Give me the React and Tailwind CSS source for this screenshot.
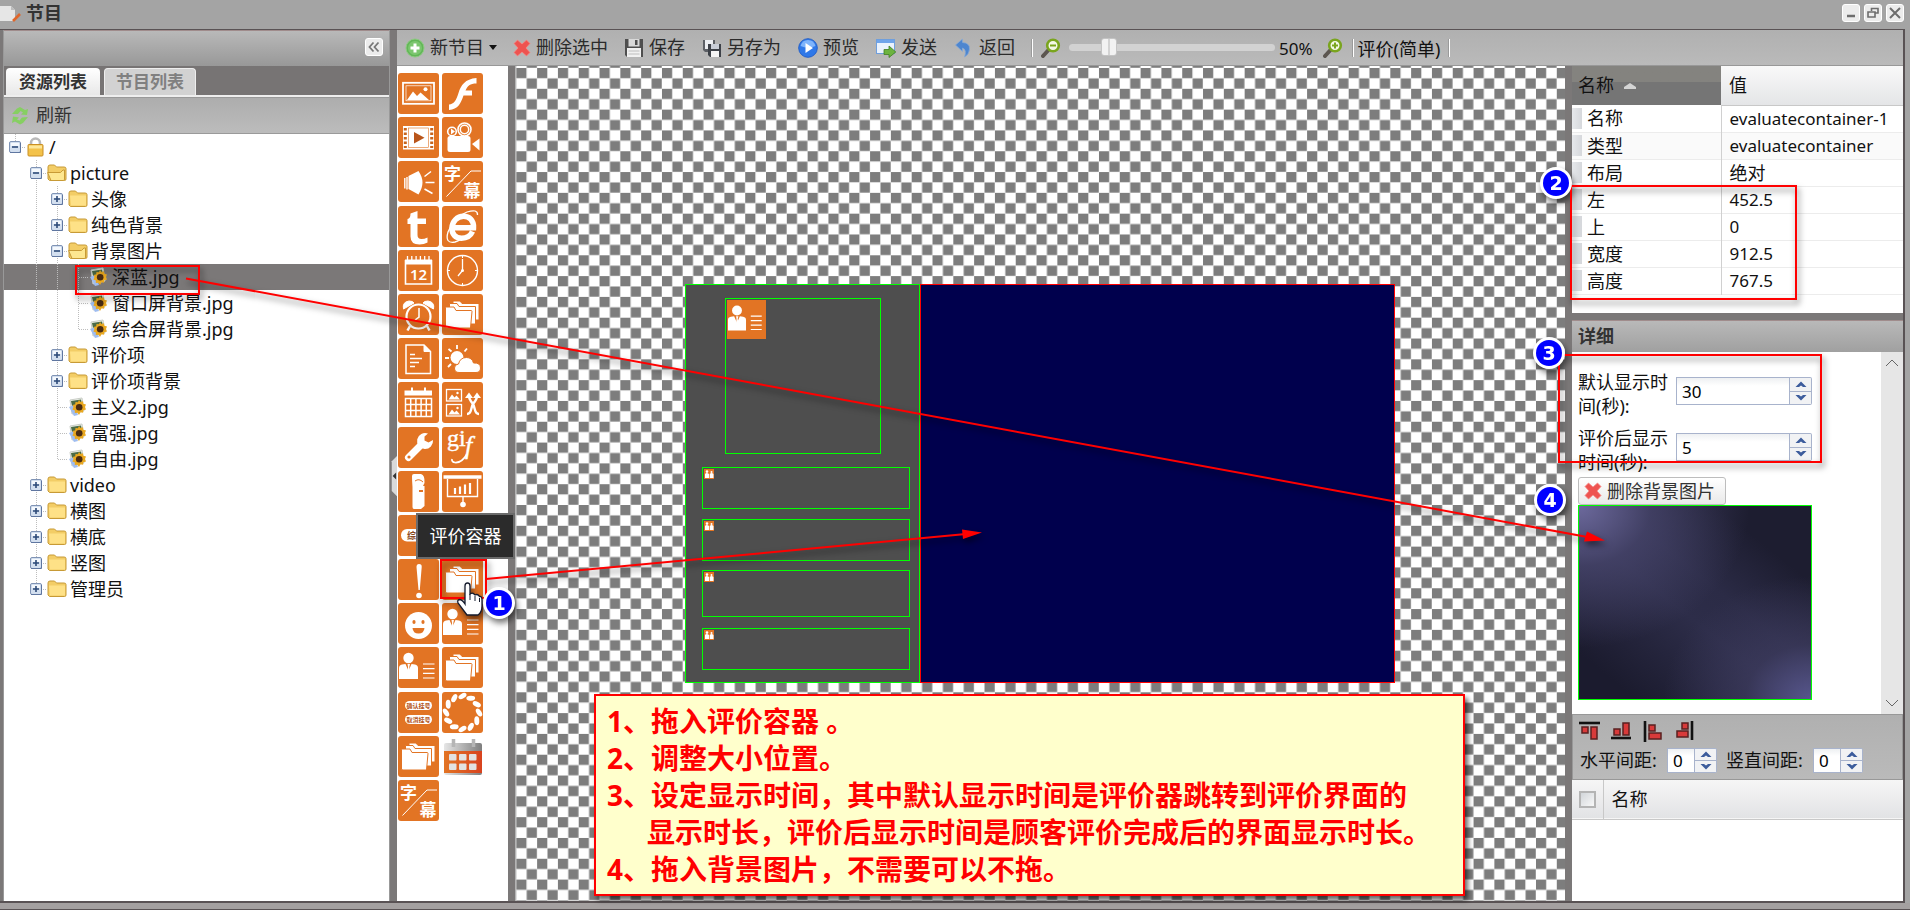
import React from "react";

const ORANGE = "#e27424";

/* ---------- tree ---------- */

const TREE = [
  { depth: 0, label: "/", icon: "lock", toggle: "minus", last: true },
  { depth: 1, label: "picture", icon: "open", toggle: "minus" },
  { depth: 2, label: "头像", icon: "folder", toggle: "plus" },
  { depth: 2, label: "纯色背景", icon: "folder", toggle: "plus" },
  { depth: 2, label: "背景图片", icon: "open", toggle: "minus" },
  { depth: 3, label: "深蓝.jpg", icon: "image", selected: true },
  { depth: 3, label: "窗口屏背景.jpg", icon: "image" },
  { depth: 3, label: "综合屏背景.jpg", icon: "image", last: true },
  { depth: 2, label: "评价项", icon: "folder", toggle: "plus" },
  { depth: 2, label: "评价项背景", icon: "folder", toggle: "plus" },
  { depth: 2, label: "主义2.jpg", icon: "image" },
  { depth: 2, label: "富强.jpg", icon: "image" },
  { depth: 2, label: "自由.jpg", icon: "image", last: true },
  { depth: 1, label: "video", icon: "folder", toggle: "plus" },
  { depth: 1, label: "横图", icon: "folder", toggle: "plus" },
  { depth: 1, label: "横底", icon: "folder", toggle: "plus" },
  { depth: 1, label: "竖图", icon: "folder", toggle: "plus" },
  { depth: 1, label: "管理员", icon: "folder", toggle: "plus", last: true },
];

function Guide({ line, toggle, own, last }) {
  return (
    <svg className="h-[26px] w-[21px] shrink-0" viewBox="0 0 21 26" aria-hidden="true">
      {line && (
        <path d={last ? "M10.5 0V13" : "M10.5 0V26"} stroke="#bdbdbd" strokeDasharray="1 1" fill="none" />
      )}
      {own && <path d="M11 13.5H21" stroke="#bdbdbd" strokeDasharray="1 1" fill="none" />}
      {toggle && (
        <g>
          <rect x="4.5" y="7.5" width="11" height="11" rx="1.5" fill="#d3dfef" stroke="#7f93b5" />
          <path d="M6 9H14V12H6Z" fill="#f4f8fd" />
          <path d="M5 18.5H15.5V9" fill="none" stroke="#5f76a0" />
          <path d={toggle === "plus" ? "M7 13H13M10 10V16" : "M7 13H13"} stroke="#2d4a78" strokeWidth="1.6" />
        </g>
      )}
    </svg>
  );
}

function TreeIcon({ type }) {
  if (type === "lock")
    return (
      <svg className="h-5 w-5 shrink-0" viewBox="0 0 20 20" aria-hidden="true">
        <path d="M5 9V6a4.500 4.500 0 0 1 9 0v3" fill="none" stroke="#b9b9b9" strokeWidth="2.600" />
        <rect x="2" y="7.500" width="15" height="11.500" rx="1" fill="#f3c24a" stroke="#c98f24" />
        <path d="M3 10H16" stroke="#fde79a" strokeWidth="3" />
      </svg>
    );
  if (type === "image")
    return (
      <svg className="h-5 w-5 shrink-0" viewBox="0 0 20 20" aria-hidden="true">
        <path d="M2 3L14 1L16 14L4 17Z" fill="#eef1ea" stroke="#c9cdc6" />
        <path d="M3 4L13 2.500L14 7L4 9Z" fill="#4c6b46" />
        <path d="M1 10L6 8L10 18L6 19Z" fill="#9fbdf0" />
        <path d="M11 3l1.500 2 2.600-.8.2 2.600 2.700.8-1 2.400 1 2.400-2.700.8-.2 2.600-2.600-.6L11 18l-1.600-2.300-2.600.3.100-2.600-2.500-1 1.100-2.300L4.700 8l2.500-.8L7.500 5l2.400.2z" fill="#e9a820" />
        <circle cx="11.200" cy="10.200" r="3.300" fill="#4a2c12" />
      </svg>
    );
  return (
    <svg className="h-5 w-5 shrink-0" viewBox="0 0 20 20" aria-hidden="true">
      <path d="M1 16V4Q1 2 3 2H7.500L9.500 4H17Q19 4 19 5.500V16Q19 17.500 17.500 17.500H2.500Z" fill="#f3cd66" stroke="#c79a36" />
      {type === "open" ? (
        <path d="M.6 9.500H13.500L16 7H17.500V16Q17.500 17.500 16.500 17.500H4Z" fill="#fde791" stroke="#c79a36" />
      ) : (
        <path d="M2 6.500H18V16.500H3Z" fill="#fee187" />
      )}
    </svg>
  );
}

function TreeRow({ node }) {
  const cells = [];
  for (let i = 0; i < node.depth; i++) cells.push(<Guide key={i} line={i > 0} />);
  return (
    <li className={`flex h-[26px] items-center pl-px ${node.selected ? "bg-[#7b7878]" : ""}`}>
      {cells}
      <Guide line own toggle={node.toggle} last={node.last} />
      <TreeIcon type={node.icon} />
      <span className="ml-[3px] whitespace-nowrap">{node.label}</span>
    </li>
  );
}

/* ---------- palette tiles ---------- */

const Folders = () => (
  <g fill="#fff" stroke={ORANGE} strokeWidth="1">
    <path d="M11 26V7H18L20 9.500H37V26Z" />
    <path d="M7.500 30V9.500H15L17 12.500H33.500V30Z" />
    <path d="M3.500 33V13.500Q3.500 13 4 13H12L14 16.500H29Q30 16.500 30 17.500L28.500 34H5Q3.500 34 3.500 33Z" />
  </g>
);

const Person = () => (
  <g fill="#fff">
    <circle cx="10.500" cy="11" r="5.200" />
    <path d="M1 32V21Q1 18 4 17.500L7.500 17L10.500 24L13.500 17L17 17.500Q20 18 20 21V32Z" />
    <path d="M9.500 17H12L11.300 20L12 25L10.700 27L9.500 25L10 20Z" />
    <path d="M25 17H36.500M25 21.700H36.500M25 26.400H36.500M25 31H36.500" stroke="#fff" strokeWidth="1.200" />
  </g>
);

const Subtitle = () => (
  <g fill="#fff" fontFamily="'Noto Sans CJK SC', sans-serif" fontWeight="700">
    <text x="2" y="18.500" fontSize="17">字</text>
    <text x="21.500" y="35.500" fontSize="17">幕</text>
    <path d="M4.500 35.500L29 10H39" fill="none" stroke="#fff" strokeWidth="1" />
  </g>
);

const MiniPic = ({ y }) => (
  <g>
    <rect x="4.500" y={y} width="15" height="11.500" fill="none" stroke="#fff" strokeWidth="1.300" />
    <path d={`M6.500 ${y + 10}l3.500-5 2.500 3 2-2 3.500 4z`} fill="#fff" />
    <circle cx="15.500" cy={y + 3.5} r="1.200" fill="#fff" />
  </g>
);

const DRAW = {
  图片: (
    <g>
      <rect x="5" y="9.800" width="31" height="21" fill="none" stroke="#fff" strokeWidth="1.800" />
      <rect x="8" y="12.800" width="25" height="15" fill="none" stroke="#fff" strokeWidth=".7" />
      <path d="M9 27L15 18.500L19 23L22.500 19.500L31 27Z" fill="#fff" />
      <circle cx="27.500" cy="16.300" r="2" fill="#fff" />
    </g>
  ),
  动画: (
    <path d="M34.500 5C23 6 19 12 16.500 20C14 28 12 31 7 31.500V37C16 36.500 19 30 21.500 22.500H30V17.500H23.500C25.500 13 28 10.500 34.500 10.500Z" fill="#fff" />
  ),
  视频: (
    <g>
      <rect x="5" y="9" width="31" height="23.500" fill="#fff" />
      <path d="M7.300 11V31M33.700 11V31" stroke="#c8641c" strokeWidth="3" strokeDasharray="2.500 2" />
      <rect x="10.500" y="11" width="20" height="19.500" fill="none" stroke={ORANGE} strokeWidth=".6" />
      <path d="M16 15V26.500L26.500 20.700Z" fill="#b9551a" />
    </g>
  ),
  摄像: (
    <g fill="#fff">
      <circle cx="10" cy="14.500" r="4.300" fill="none" stroke="#fff" strokeWidth="1.600" />
      <path d="M9 11.500V17.500L13 14.500Z" />
      <circle cx="22.500" cy="12.500" r="4.200" fill="none" stroke="#fff" strokeWidth="1.500" />
      <circle cx="22.500" cy="12.500" r="6.500" fill="none" stroke="#fff" strokeWidth="1.600" />
      <rect x="5.500" y="19" width="23" height="16" rx="2.500" />
      <path d="M30 27L37.500 21.500V33.500Z" />
    </g>
  ),
  声音: (
    <g fill="#fff">
      <path d="M10.500 15L20.500 10Q24.500 16 24.500 21.500Q24.500 27 20.500 33.500L10.500 28Z" />
      <path d="M6.800 17V27.500M9 16V28.500" stroke="#fff" strokeWidth="1.400" />
      <path d="M26.500 15.500L33 10.500M27.500 21.500H36.500M26.500 28L34.500 32.500" stroke="#fff" strokeWidth="1.500" />
    </g>
  ),
  字幕: <Subtitle />,
  文本: (
    <path d="M12.500 7.500L19.500 5V12.500H28V18H19.500V29Q19.500 33 23.500 33Q26.500 33 29.500 31.500V36.500Q26 38.500 21.500 38.500Q12.500 38.500 12.500 30.500V18H9.500V13Q12.500 12.500 12.500 7.500Z" fill="#fff" />
  ),
  网页: (
    <g fill="none" stroke="#fff">
      <path d="M11 21.800H31.500C32 14 27 10.300 21.500 10.300C15 10.300 10.500 15.500 10 21.500C9.500 28 13.500 32.200 19.500 32.200C25 32.200 28.500 30 30.500 25.500" strokeWidth="5.500" />
      <path d="M35.500 9Q36 2.500 25 6Q12 11 6 26Q2.500 38 13 36Q16 35.200 19 33" strokeWidth="1.300" />
    </g>
  ),
  日期: (
    <g>
      <path d="M7.500 10V34H33.500V10" fill="none" stroke="#fff" strokeWidth="1.600" />
      <path d="M7 12H34" stroke="#fff" strokeWidth="5" />
      <path d="M9.500 6V11M13.800 6V11M18.100 6V11M22.400 6V11M26.700 6V11M31 6V11" stroke="#fff" strokeWidth="1.300" />
      <text x="20.500" y="30" fontSize="15" fontWeight="600" fill="#fff" textAnchor="middle" fontFamily="'Noto Sans', sans-serif">12</text>
    </g>
  ),
  时钟: (
    <g fill="none" stroke="#fff">
      <circle cx="20.500" cy="20.500" r="15" strokeWidth="1.400" />
      <path d="M20.500 9V20.500L16 26" strokeWidth="1.300" />
      <circle cx="20.500" cy="20.500" r="1.500" fill="#fff" stroke="none" />
      <path d="M20.500 6V8M20.500 33V35M6 20.500H8M33 20.500H35" strokeWidth="1" />
    </g>
  ),
  闹钟: (
    <g fill="none" stroke="#fff">
      <circle cx="20.500" cy="22.500" r="12" strokeWidth="2.200" />
      <path d="M5.500 15Q4 8 11 7Q15 7 16 9Z M35.500 15Q37 8 30 7Q26 7 25 9Z" fill="#fff" strokeWidth="1" />
      <path d="M12 32L9.500 36.500M29 32L31.500 36.500" strokeWidth="2.500" />
      <path d="M21 14V23L17 26" strokeWidth="1.500" />
    </g>
  ),
  容器: <Folders />,
  文档: (
    <g fill="none" stroke="#fff">
      <path d="M8 7H26L32.500 13.500V35.500H8Z" strokeWidth="1.500" />
      <path d="M26 7V13.500H32.500Z" fill="#fff" strokeWidth="1" />
      <path d="M12 16.500H17M12 20.500H24M12 24.500H21M12 28.500H17" strokeWidth="1.700" />
    </g>
  ),
  天气: (
    <g fill="#fff">
      <circle cx="15" cy="19.500" r="6.500" />
      <path d="M15 7V11M6.500 11L9.500 13.500M3 20H7M6 29L9 26M25 10.500L22.500 13.500" stroke="#fff" strokeWidth="1.800" />
      <path d="M17 34.500Q12.500 34.500 12.500 30Q12.500 26.500 16.500 26Q18 19.500 24.500 19.500Q30 19.500 31.500 25Q38.500 24.500 38.500 30Q38.500 34.500 34 34.500Z" stroke={ORANGE} strokeWidth="1" />
    </g>
  ),
  日历: (
    <g stroke="#fff" fill="none">
      <path d="M6.500 11H34" strokeWidth="5" />
      <path d="M14 5.500V10M27 5.500V10" strokeWidth="2" />
      <path d="M7.500 16.500H33.500V34.500H7.500ZM7.500 22.500H33.500M7.500 28.500H33.500M12.700 16V34.500M17.900 16V34.500M23.100 16V34.500M28.300 16V34.500" strokeWidth="1.500" />
    </g>
  ),
  随机: (
    <g>
      <MiniPic y={7.5} />
      <MiniPic y={22.5} />
      <path d="M25 32C30 32 28.500 26 31 22C33.500 18 35 18 35 14M37 32C32 32 33.500 26 31 22C28.500 18 27 18 27 14" fill="none" stroke="#fff" strokeWidth="2.400" />
      <path d="M23 16L27 10.500L31 16ZM31 16L35 10.500L39 16Z" fill="#fff" />
    </g>
  ),
  工具: (
    <g>
      <path d="M10.500 30.500L24 17" stroke="#fff" strokeWidth="7" strokeLinecap="round" />
      <path d="M30 6.500A8 8 0 1 0 35 13L30.500 15.500L26.500 13.500V9.500Z" fill="#fff" />
      <circle cx="11" cy="30" r="1.600" fill={ORANGE} />
    </g>
  ),
  gif: (
    <g fill="#fff" stroke="#fff" strokeWidth=".4" fontFamily="'Liberation Serif', serif">
      <text x="5" y="19" fontSize="24">gi</text>
      <text x="23" y="27" fontSize="26" fontStyle="italic">f</text>
      <path d="M25 27Q20 36 13 35.500Q9.500 35 10 32" fill="none" strokeWidth="1.700" />
    </g>
  ),
  取号机: (
    <g fill="#fff">
      <path d="M14 5Q14 3 16 3H23Q27 4 26.500 12L25 15H26.500V35L23 38H16Q14.500 38 14.500 36V16Q14 10 14 5Z" />
      <path d="M17 10Q21 7 25 11" stroke={ORANGE} fill="none" />
      <rect x="21" y="19" width="4" height="2" fill={ORANGE} />
    </g>
  ),
  图表: (
    <g fill="none" stroke="#fff">
      <path d="M1.500 6H39.500" strokeWidth="3.600" />
      <path d="M5.500 8V25.500H35.500V8" strokeWidth="1.400" />
      <path d="M13 23V17M18 23V15.500M23 23V13.500M28 23V12" strokeWidth="2.200" />
      <path d="M21 26V32" strokeWidth="1.400" />
      <circle cx="21" cy="33.500" r="2.800" fill="#fff" stroke="none" />
    </g>
  ),
  综合: (
    <g>
      <rect x="3" y="14" width="34" height="12.500" rx="6" fill="#fff" />
      <text x="9" y="23.500" fontSize="9" fontWeight="700" fill="#8a4a20" fontFamily="'Noto Sans CJK SC', sans-serif">综合</text>
    </g>
  ),
  空白: null,
  提示: (
    <g fill="#fff">
      <path d="M18.500 8Q18.500 5 21 5Q24 5 23.700 8L21.800 31H20.500Z" />
      <circle cx="21" cy="36.500" r="2.800" />
    </g>
  ),
  表情: (
    <g>
      <circle cx="20.500" cy="22.500" r="13.500" fill="#fff" />
      <ellipse cx="16" cy="19" rx="1.600" ry="2" fill={ORANGE} />
      <ellipse cx="25" cy="19" rx="1.600" ry="2" fill={ORANGE} />
      <path d="M14.500 25H26.500Q26 30.500 20.500 30.500Q15 30.500 14.500 25Z" fill={ORANGE} />
    </g>
  ),
  人员: <Person />,
  挂号: (
    <g fontFamily="'Noto Sans CJK SC', sans-serif" fontSize="6" fontWeight="700" fill="#b4561c" textAnchor="middle">
      <rect x="7" y="9" width="27" height="9" rx="4.500" fill="#fff" />
      <rect x="7" y="23" width="27" height="9" rx="4.500" fill="#fff" />
      <text x="20.500" y="15.800">确认挂号</text>
      <text x="20.500" y="29.800">取消挂号</text>
    </g>
  ),
  转盘: (
    <g fill="#fff">
      {[0, 30, 60, 90, 120, 150, 180, 210, 240, 270, 300, 330].map((a) => (
        <ellipse key={a} cx="20.500" cy="4" rx="4.400" ry="2.500" transform={`rotate(${a} 20.5 20.5) rotate(-32 20.5 4)`} />
      ))}
    </g>
  ),
};

const TILES = [
  "图片", "动画", "视频", "摄像", "声音", "字幕", "文本", "网页", "日期", "时钟", "闹钟", "容器",
  "文档", "天气", "日历", "随机", "工具", "gif", "取号机", "图表", "综合", "空白", "提示", "容器",
  "表情", "人员", "人员", "容器", "挂号", "转盘", "容器", "灰日历", "字幕",
];

function GrayCalendar() {
  return (
    <svg className="h-[41px] w-[41px]" viewBox="0 0 41 41" aria-hidden="true">
      <defs>
        <linearGradient id="calBody" x1="0" y1="0" x2="1" y2="0">
          <stop offset="0" stopColor="#e27424" />
          <stop offset="1" stopColor="#d8431f" />
        </linearGradient>
        <linearGradient id="calTop" x1="0" y1="0" x2="1" y2="0">
          <stop offset="0" stopColor="#e6e6e6" />
          <stop offset="1" stopColor="#7e7e7e" />
        </linearGradient>
      </defs>
      <rect x="2" y="7" width="38" height="32" rx="2" fill="url(#calTop)" />
      <rect x="2" y="15" width="38" height="22" fill="url(#calBody)" />
      <path d="M11.500 3V11M31.500 3V11" stroke="#b5b5b5" strokeWidth="3.500" />
      {[7, 17, 27].map((x) => (
        <g key={x} fill="#e2e2e2">
          <rect x={x} y="18" width="7.500" height="6.500" rx="1" />
          <rect x={x} y="27.500" width="7.500" height="6.500" rx="1" />
        </g>
      ))}
    </svg>
  );
}

function Tile({ name }) {
  return (
    <button type="button" aria-label={name} className="block h-[41px] w-[41px]">
      {name === "灰日历" ? (
        <GrayCalendar />
      ) : (
        <svg className="h-[41px] w-[41px] overflow-visible rounded-[3px] bg-[#e27424]" viewBox="0 0 41 41" aria-hidden="true">
          {DRAW[name]}
        </svg>
      )}
    </button>
  );
}

/* ---------- toolbar icons ---------- */

const RedCross = () => (
  <svg className="h-[18px] w-[18px] shrink-0" viewBox="0 0 18 18" aria-hidden="true">
    <path d="M4.500 1L9 5L13.500 1L17 4.500L13 9L17 13.500L13.500 17L9 13L4.500 17L1 13.500L5 9L1 4.500Z" fill="#ee5350" stroke="#f58a86" strokeWidth=".8" strokeLinejoin="round" />
  </svg>
);

const Lens = ({ plus }) => (
  <svg className="h-5 w-5 shrink-0" viewBox="0 0 20 20" aria-hidden="true">
    <path d="M2 18L7.500 12" stroke="#5c5650" strokeWidth="4" strokeLinecap="round" />
    <circle cx="12" cy="7.500" r="5.800" fill="#f3f8e6" stroke="#7aa51e" strokeWidth="2.600" />
    <path d={plus ? "M9 7.500H15M12 4.500V10.500" : "M9 7.500H15"} stroke="#7aa51e" strokeWidth="2" />
  </svg>
);

const TB = {
  add: (
    <svg className="h-5 w-5" viewBox="0 0 20 20" aria-hidden="true">
      <circle cx="10" cy="10" r="9" fill="#62b657" stroke="#8ccb80" />
      <circle cx="10" cy="10" r="7" fill="#7cc66f" />
      <path d="M10 5.500V14.500M5.500 10H14.500" stroke="#fff" strokeWidth="3" />
    </svg>
  ),
  save: (
    <svg className="h-5 w-5" viewBox="0 0 20 20" aria-hidden="true">
      <path d="M1 1H19V19H3L1 17Z" fill="#4f4f4f" />
      <rect x="4.500" y="1" width="11" height="7.500" fill="#d9d9d9" />
      <rect x="11" y="2" width="2.500" height="5" fill="#4f4f4f" />
      <rect x="3" y="10" width="14" height="9" fill="#f1f1f1" />
      <path d="M4.500 13H15.500M4.500 16H15.500" stroke="#bdbdbd" />
    </svg>
  ),
  saveAs: (
    <svg className="h-5 w-5" viewBox="0 0 20 20" aria-hidden="true">
      <path d="M1 2H13V14H3L1 12Z" fill="#5d6066" />
      <rect x="3" y="2" width="8" height="9" fill="#eceef2" />
      <path d="M6 6H19V19H8L6 17Z" fill="#3d4148" />
      <rect x="9" y="6" width="8" height="5" fill="#c9ced8" />
      <rect x="9" y="13" width="8" height="6" fill="#f5f5f5" />
    </svg>
  ),
  play: (
    <svg className="h-5 w-5" viewBox="0 0 20 20" aria-hidden="true">
      <circle cx="10" cy="10" r="9.300" fill="#2f78e8" stroke="#2560c8" />
      <path d="M2.500 8Q4 2 10 2T17.500 8Q10 11 2.500 8Z" fill="#7fb4fb" />
      <path d="M7.500 5V15L15 10Z" fill="#fff" />
    </svg>
  ),
  send: (
    <svg className="h-5 w-5" viewBox="0 0 20 20" aria-hidden="true">
      <rect x=".5" y="1.500" width="18" height="14" fill="#eaf2fd" stroke="#6f9fdd" />
      <rect x="1" y="2" width="17" height="3" fill="#6fa4ea" />
      <path d="M8 11.500H13V8L19.800 14L13 19.500V16.500H8Z" fill="#6cb33f" stroke="#3f7f22" strokeWidth=".8" />
    </svg>
  ),
  back: (
    <svg className="h-5 w-5" viewBox="0 0 20 20" aria-hidden="true">
      <path d="M1.500 7L8.500 1V4.500Q16 5 15.500 11Q15.500 16 10.500 19Q13 11.500 8.500 10V13.500Z" fill="#4e86cf" stroke="#86abd9" strokeWidth=".7" />
    </svg>
  ),
};

function ToolButton({ icon, label, className = "", caret }) {
  return (
    <button type="button" className={`flex items-center gap-[5px] whitespace-nowrap text-[#2b2b2b] ${className}`}>
      {icon}
      <span>{label}</span>
      {caret && (
        <svg className="h-[5px] w-2" viewBox="0 0 8 5" aria-hidden="true">
          <path d="M0 0H8L4 5Z" fill="#111" />
        </svg>
      )}
    </button>
  );
}

const Separator = () => <span className="h-[18px] w-[2px] border-r border-white bg-[#9a9a9a]" />;

/* ---------- fields ---------- */

function Chevron({ up }) {
  return (
    <svg className="h-[7px] w-[12px]" viewBox="0 0 12 7" aria-hidden="true">
      <path d={up ? "M6 .5L11.500 6H8L6 4.500L4 6H.5Z" : "M6 6.500L.5 1H4L6 2.500L8 1H11.500Z"} fill="#3c5c9c" />
    </svg>
  );
}

function Spinner({ id, value, wide }) {
  return (
    <div className={`flex shrink-0 ${wide ? "h-7 w-[136px]" : "h-[25px] w-[50px]"}`}>
      <input
        id={id}
        type="text"
        defaultValue={value}
        className="h-full min-w-0 flex-1 border border-[#a8b3cc] bg-linear-to-b from-[#eef0f2] to-white to-30% px-[5px] text-[17px] text-black outline-none"
      />
      <div className="flex w-[22px] flex-col rounded-r-[2px] border border-l-0 border-[#a8b3cc] bg-[#f1f2f4]">
        <button type="button" aria-label="增加" className="flex flex-1 items-center justify-center border-b border-[#a8b3cc]">
          <Chevron up />
        </button>
        <button type="button" aria-label="减少" className="flex flex-1 items-center justify-center">
          <Chevron />
        </button>
      </div>
    </div>
  );
}

/* ---------- align icons ---------- */

const ALIGN = [
  ["顶部对齐", "M0 2H21", [[3, 6, 6, 6], [12, 6, 6, 12]]],
  ["底部对齐", "M0 17H20", [[3, 8, 6, 6], [12, 2, 6, 12]]],
  ["左对齐", "M2 0V21", [[6, 4, 6, 6], [6, 12, 12, 6]]],
  ["右对齐", "M17 0V19", [[7, 2, 6, 6], [2, 10, 11, 6]]],
];

/* ---------- canvas ---------- */

function Checkerboard() {
  return (
    <svg className="absolute inset-0 h-full w-full" aria-hidden="true">
      <defs>
        <pattern id="checks" x="0.300" y="2" width="20.810" height="20.810" patternUnits="userSpaceOnUse">
          <rect width="20.810" height="20.810" fill="#fff" />
          <rect width="10.200" height="10.200" fill="#7d7d7d" />
          <rect x="10.400" y="10.400" width="10.200" height="10.200" fill="#7d7d7d" />
        </pattern>
      </defs>
      <rect width="100%" height="100%" fill="url(#checks)" />
    </svg>
  );
}

function MiniPerson() {
  return (
    <svg className="m-px h-[10px] w-[10px] bg-[#e27424]" viewBox="0 0 10 10" aria-hidden="true">
      <path d="M1 9V5Q2.500 3 5 5V9ZM5.700 9V5Q7.500 3 9.500 5V9Z" fill="#fff" />
      <circle cx="3" cy="2.600" r="1.300" fill="#fff" />
      <circle cx="7.500" cy="3" r="1" fill="#fff" />
    </svg>
  );
}

function Stage() {
  const slot = "absolute left-4 w-[208px] border border-[#00ff00]";
  return (
    <div className="absolute left-[169px] top-[218px] flex h-[399px] w-[710px]">
      <div className="relative w-[235px] border border-[#00ff00] bg-[#4e4e4e]">
        <div className="absolute left-[39px] top-[13px] h-[156px] w-[156px] border border-[#00ff00]">
          <svg className="m-px h-[39px] w-[39px] bg-[#e27424]" viewBox="0 0 41 41" aria-hidden="true">
            <Person />
          </svg>
        </div>
        <div className={`${slot} top-[182px] h-[42px]`}><MiniPerson /></div>
        <div className={`${slot} top-[234px] h-[42px]`}><MiniPerson /></div>
        <div className={`${slot} top-[285px] h-[47px]`}><MiniPerson /></div>
        <div className={`${slot} top-[343px] h-[42px]`}><MiniPerson /></div>
      </div>
      <div className="flex-1 border border-[#ff0000] bg-[#00004d]" />
    </div>
  );
}

/* ---------- annotations ---------- */

function Badge({ x, y, n }) {
  return (
    <g>
      <circle cx={x} cy={y} r="16" fill="#fff" />
      <circle cx={x} cy={y} r="13" fill="#0000ff" />
      <text x={x} y={y + 7} textAnchor="middle" fontSize="19" fontWeight="700" fill="#fff" fontFamily="'DejaVu Sans', sans-serif">{n}</text>
    </g>
  );
}

function Annotations() {
  return (
    <>
      <div role="tooltip" className="absolute left-[416px] top-[513px] flex h-[46px] w-[99px] items-center justify-center border-2 border-[#6b6b6b] bg-[#2b2b2b] text-[18px] text-white">
        评价容器
      </div>
      <svg className="pointer-events-none absolute inset-0 h-full w-full drop-shadow-[2px_4px_3px_rgba(0,0,0,0.55)]" aria-hidden="true">
        <g fill="none" stroke="#ff0000" strokeWidth="2">
          <rect x="76" y="266" width="123" height="28" />
          <rect x="441" y="560" width="45" height="38" />
          <rect x="1571" y="186" width="225" height="113" />
          <rect x="1559" y="355" width="262" height="107" />
          <path d="M186 278.500L1590 537.500M486 579L966 534" />
        </g>
        <path d="M1605 540.500L1584 541.500L1587 531.500ZM982 532.500L963 539L962 529.500Z" fill="#ff0000" />
        <path d="M465 604V586Q465 583 467.500 583Q470 583 470 586V594Q473 592 475 595Q478 593.500 479.500 596.500Q482 596 482 600V606Q482 612 478 615H467Q464 611 458 603Q457 600 459.500 599.500Q462 599.500 465 604Z" fill="#fff" stroke="#151b2d" strokeWidth="1.300" />
        <path d="M470 594V600M475 596V601M479.500 598V602" stroke="#151b2d" strokeWidth="1" />
        <Badge x={499} y={603} n="1" />
        <Badge x={1556} y={183} n="2" />
        <Badge x={1549} y={353} n="3" />
        <Badge x={1550} y={500} n="4" />
      </svg>
      <div className="absolute left-[594px] top-[694px] h-[202px] w-[871px] border-2 border-[#ff0000] bg-[#ffffcc] pl-[11px] pt-[7px] text-[28px] font-bold leading-[37px] text-[#ff0000] shadow-[3px_4px_5px_rgba(0,0,0,0.6)]">
        <p>1、拖入评价容器 。</p>
        <p>2、调整大小位置。</p>
        <p>3、设定显示时间，其中默认显示时间是评价器跳转到评价界面的</p>
        <p className="pl-10">显示时长，评价后显示时间是顾客评价完成后的界面显示时长。</p>
        <p>4、拖入背景图片，不需要可以不拖。</p>
      </div>
    </>
  );
}

/* ---------- panels ---------- */

function TitleBar() {
  const btn = "flex h-[18px] w-[18px] items-center justify-center rounded-[3px] border border-white bg-[#ececec]";
  return (
    <header className="flex h-[29px] shrink-0 items-center bg-[#a4a4a4] pb-[3px] pr-[6px]">
      <svg className="h-5 w-[22px]" viewBox="0 0 22 20" aria-hidden="true">
        <path d="M0 3H11L15 7V18H0Z" fill="#e6e6e6" />
        <path d="M11 3V7H15Z" fill="#bdbdbd" />
        <path d="M13 18L20 11" stroke="#e0662a" strokeWidth="2.600" />
      </svg>
      <h1 className="ml-1 text-[18px] font-bold text-[#333]">节目</h1>
      <div className="ml-auto flex gap-1">
        <button type="button" aria-label="最小化" className={btn}>
          <svg className="h-3 w-3" viewBox="0 0 12 12"><path d="M2 9H10" stroke="#6d6d6d" strokeWidth="2.500" /></svg>
        </button>
        <button type="button" aria-label="还原" className={btn}>
          <svg className="h-3 w-3" viewBox="0 0 12 12"><path d="M4.500 4V1.500H11V6H8.500M1 5H8V10H1Z" fill="none" stroke="#6d6d6d" strokeWidth="1.600" /></svg>
        </button>
        <button type="button" aria-label="关闭" className={btn}>
          <svg className="h-3 w-3" viewBox="0 0 12 12"><path d="M1 1L11 11M11 1L1 11" stroke="#6d6d6d" strokeWidth="2" /></svg>
        </button>
      </div>
    </header>
  );
}

function ResourcePanel() {
  return (
    <aside className="flex w-[387px] shrink-0 flex-col border-x border-[#999]">
      <div className="flex h-[36px] shrink-0 items-center justify-end border-t border-[#a08c8c] bg-linear-to-b from-[#b9b9b9] to-[#989898] pb-[3px] pr-[6px]">
        <button type="button" aria-label="收起" className="flex h-[18px] w-[18px] items-center justify-center rounded-[3px] border border-white bg-[#ececec]">
          <svg className="h-3 w-3" viewBox="0 0 12 12"><path d="M5.500 1.500L1.500 6L5.500 10.500M10.500 1.500L6.500 6L10.500 10.500" fill="none" stroke="#777" strokeWidth="1.800" /></svg>
        </button>
      </div>
      <div role="tablist" className="flex h-[29px] shrink-0 items-end gap-1 bg-[#777474] pl-[2px] font-bold">
        <button type="button" role="tab" aria-selected="true" className="h-[27px] w-[94px] rounded-t-[4px] bg-linear-to-b from-white to-[#e8e8e8] text-[17px] text-[#333]">资源列表</button>
        <button type="button" role="tab" aria-selected="false" className="h-[27px] w-[92px] rounded-t-[4px] border border-b-0 border-[#eee] bg-[#d2d2d2] text-[17px] text-[#808080]">节目列表</button>
      </div>
      <div className="h-[3px] shrink-0 border-b border-[#999] bg-[#eee]" />
      <div className="flex h-[36px] shrink-0 items-center border-b border-[#9a9a9a] bg-linear-to-b from-[#adadad] to-[#bcbcbc] pl-[6px]">
        <button type="button" className="flex items-center gap-[6px] text-[18px] text-[#333]">
          <svg className="h-[20px] w-[20px]" viewBox="0 0 20 20" aria-hidden="true">
            <path d="M2 8L7 2.500L10 1L15 4L18 3L17 9L11 8.500L13 6.500L10.500 5L8 8Z" fill="#86cf62" />
            <path d="M18 11L13 17L10 18.500L5 15.500L2 17L3 10.500L9 11.500L7 13.500L9.500 14.500L12 11.500Z" fill="#86cf62" />
          </svg>
          刷新
        </button>
      </div>
      <ul className="flex-1 bg-white text-[18px] leading-[26px] text-[#111]">
        {TREE.map((node) => (
          <TreeRow key={node.label} node={node} />
        ))}
      </ul>
    </aside>
  );
}

function Toolbar() {
  return (
    <div className="flex h-[36px] shrink-0 items-center border-b border-[#989898] bg-linear-to-b from-[#b0b0b0] to-[#bababa] pl-2 text-[18px]">
      <ToolButton icon={TB.add} label="新节目" caret />
      <ToolButton icon={<RedCross />} label="删除选中" className="ml-4" />
      <ToolButton icon={TB.save} label="保存" className="ml-4" />
      <ToolButton icon={TB.saveAs} label="另存为" className="ml-[17px]" />
      <ToolButton icon={TB.play} label="预览" className="ml-[17px]" />
      <ToolButton icon={TB.send} label="发送" className="ml-[17px]" />
      <ToolButton icon={TB.back} label="返回" className="ml-[17px]" />
      <span className="ml-4 flex"><Separator /></span>
      <button type="button" aria-label="缩小" className="ml-2"><Lens /></button>
      <input
        type="range"
        aria-label="缩放"
        min="0"
        max="300"
        defaultValue="50"
        className="ml-2 h-[18px] w-[206px] appearance-none bg-transparent [&::-webkit-slider-runnable-track]:h-[7px] [&::-webkit-slider-runnable-track]:rounded-full [&::-webkit-slider-runnable-track]:bg-[#d2d2d2] [&::-webkit-slider-thumb]:mt-[-6px] [&::-webkit-slider-thumb]:h-[18px] [&::-webkit-slider-thumb]:w-4 [&::-webkit-slider-thumb]:appearance-none [&::-webkit-slider-thumb]:rounded-[3px] [&::-webkit-slider-thumb]:border [&::-webkit-slider-thumb]:border-[#c4c4c4] [&::-webkit-slider-thumb]:bg-linear-to-r [&::-webkit-slider-thumb]:from-[#f2f2f2] [&::-webkit-slider-thumb]:from-45% [&::-webkit-slider-thumb]:via-[#8a8a8a] [&::-webkit-slider-thumb]:via-50% [&::-webkit-slider-thumb]:to-[#f2f2f2] [&::-webkit-slider-thumb]:to-55%"
      />
      <span className="ml-1 pt-[3px] text-[17px] text-[#111]">50%</span>
      <button type="button" aria-label="放大" className="ml-[10px]"><Lens plus /></button>
      <span className="ml-[9px] flex"><Separator /></span>
      <span className="ml-1 whitespace-nowrap pt-[3px] text-[#111]">评价(简单)</span>
      <span className="ml-2 flex"><Separator /></span>
    </div>
  );
}

const PROPS = [
  ["名称", "evaluatecontainer-1"],
  ["类型", "evaluatecontainer"],
  ["布局", "绝对"],
  ["左", "452.5"],
  ["上", "0"],
  ["宽度", "912.5"],
  ["高度", "767.5"],
];

function PropertyPanel() {
  return (
    <aside className="flex w-[331px] shrink-0 flex-col gap-[7px] bg-[#7b7878] text-[18px] text-[#111]">
      <section className="h-[247px] shrink-0 bg-white">
        <table className="w-full table-fixed border-collapse">
          <thead>
            <tr className="h-[39px] text-left">
              <th className="w-[149px] bg-linear-to-b from-[#84837f] from-40% to-[#757575] to-40% pl-[6px] font-normal">
                <span className="flex items-center gap-[10px]">
                  名称
                  <svg className="h-[6px] w-3" viewBox="0 0 12 6" aria-hidden="true"><path d="M6 0L12 4V6H0V4Z" fill="#d4d4d4" /></svg>
                </span>
              </th>
              <th className="border-b border-[#c8c8c8] bg-linear-to-b from-[#f9f9f9] to-[#e4e5e7] pl-2 font-normal">值</th>
            </tr>
          </thead>
          <tbody>
            {PROPS.map(([name, value], i) => (
              <tr key={name} className={`h-[27px] border-b border-[#ececec] leading-[26px] ${i === 1 ? "bg-[#fafafa]" : ""}`}>
                <td className="border-r border-[#d0d0d0] p-0">
                  <span className="flex items-center gap-[5px]">
                    <span className="h-[21px] w-[10px] bg-linear-to-r from-[#e6e8eb] to-[#d6d8dc]" />
                    {name}
                  </span>
                </td>
                <td className={`overflow-hidden whitespace-nowrap py-0 pl-2 pr-0 ${i === 2 ? "text-[18px]" : "text-[17px]"}`}>
                  {value}
                </td>
              </tr>
            ))}
          </tbody>
        </table>
      </section>

      <section className="flex min-h-0 flex-1 flex-col">
        <h2 className="flex h-[32px] shrink-0 items-center border-t border-[#a08c8c] bg-linear-to-b from-[#b9b9b9] to-[#a0a0a0] pl-[6px] text-[18px] font-bold text-[#333]">详细</h2>
        <div className="flex h-[362px] shrink-0 bg-white">
          <div className="flex-1 pl-[6px] pt-[18px]">
            <div className="flex h-14 leading-[24px]">
              <label htmlFor="defaultTime" className="w-[98px]">默认显示时间(秒):</label>
              <div className="pt-[7px]"><Spinner id="defaultTime" value="30" wide /></div>
            </div>
            <div className="flex h-[51px] leading-[24px]">
              <label htmlFor="afterTime" className="w-[98px]">评价后显示时间(秒):</label>
              <div className="pt-[7px]"><Spinner id="afterTime" value="5" wide /></div>
            </div>
            <button type="button" className="flex h-7 w-[148px] items-center gap-[5px] rounded-[3px] border border-[#bdbdbd] bg-linear-to-b from-white to-[#e9e9e9] pl-[5px] text-[#333]">
              <RedCross />
              删除背景图片
            </button>
            <div
              role="img"
              aria-label="深蓝"
              className="h-[195px] w-[234px] border border-[#00ff00] bg-[radial-gradient(ellipse_at_0%_0%,#6c699c_0%,rgba(74,72,112,0.7)_22%,rgba(45,45,72,0)_52%),radial-gradient(ellipse_at_100%_100%,#57568c_0%,rgba(64,62,98,0.6)_20%,rgba(45,45,72,0)_45%),linear-gradient(39deg,#1b1b2e_12%,#2d2d49_45%,#2b2b46_58%,#1d1d30_80%)]"
            />
          </div>
          <div className="flex w-[22px] flex-col items-center justify-between bg-[#e6e6e6] py-[7px]">
            <svg className="h-2 w-3" viewBox="0 0 12 8" aria-hidden="true"><path d="M0 7L6 1L12 7" fill="none" stroke="#666" /></svg>
            <svg className="h-2 w-3" viewBox="0 0 12 8" aria-hidden="true"><path d="M0 1L6 7L12 1" fill="none" stroke="#666" /></svg>
          </div>
        </div>
        <div className="h-[66px] shrink-0 border border-[#989898] bg-linear-to-b from-[#b0b0b0] to-[#bababa] pl-[6px] pt-[6px]">
          <div className="flex h-[26px] gap-[11px]">
            {ALIGN.map(([label, bar, blocks]) => (
              <button key={label} type="button" aria-label={label} className="h-[21px] w-[21px]">
                <svg className="h-[21px] w-[21px]" viewBox="0 0 21 21" aria-hidden="true">
                  <path d={bar} stroke="#111" strokeWidth="2.600" />
                  {blocks.map(([x, y, w, h]) => (
                    <rect key={x + "-" + y} x={x} y={y} width={w} height={h} fill="#d83a3a" stroke="#5a2020" strokeWidth="1.500" />
                  ))}
                </svg>
              </button>
            ))}
          </div>
          <div className="flex items-center">
            <label htmlFor="hGap" className="w-[88px] whitespace-nowrap pl-px">水平间距:</label>
            <Spinner id="hGap" value="0" />
            <label htmlFor="vGap" className="ml-[9px] w-[87px] whitespace-nowrap">竖直间距:</label>
            <Spinner id="vGap" value="0" />
          </div>
        </div>
        <div className="flex-1 bg-white">
          <table className="w-full table-fixed border-collapse">
            <thead>
              <tr className="h-[39px] border-b border-[#c8c8c8] bg-linear-to-b from-[#f6f6f6] to-[#e2e3e5] text-left">
                <th className="w-[31px] border-r border-[#c8c8c8] p-0">
                  <input type="checkbox" aria-label="全选" className="ml-[7px] block h-[17px] w-[17px] appearance-none border-2 border-[#b4b4b4] bg-linear-to-br from-[#d2d6da] to-[#f8f8f8]" />
                </th>
                <th className="pl-2 font-normal">名称</th>
              </tr>
            </thead>
          </table>
        </div>
      </section>
    </aside>
  );
}

export default function App() {
  return (
    <div className="relative flex h-screen min-h-[910px] w-full flex-col overflow-hidden bg-[#a4a4a4] font-['Noto_Sans','Noto_Sans_CJK_SC',sans-serif]">
      <TitleBar />
      <main className="mr-[5px] flex min-h-0 flex-1 border-b-2 border-r-2 border-t border-[#595254] bg-[#7b7878] pl-[3px]">
        <ResourcePanel />
        <div className="flex w-[7px] shrink-0 items-center">
          <svg className="mt-5 h-[46px] w-[7px]" viewBox="0 0 8 46" aria-hidden="true">
            <path d="M8 0L2 6V40L8 46Z" fill="#d9d9d9" />
            <path d="M7 19V27L3 23Z" fill="#333" />
          </svg>
        </div>
        <div className="flex min-w-0 flex-1 flex-col">
          <Toolbar />
          <div className="flex min-h-0 flex-1">
            <div className="w-[111px] shrink-0 bg-white pl-px pt-[7px]">
              <div className="grid h-[748px] grid-cols-[41px_41px] content-between gap-x-[3px]">
                {TILES.map((name, i) => (
                  <Tile key={i} name={name} />
                ))}
              </div>
            </div>
            <div className="w-[7px] shrink-0 bg-[#7b7878]" />
            <div className="relative min-w-0 flex-1 overflow-hidden border-l border-[#b4b4b4]">
              <Checkerboard />
              <Stage />
            </div>
            <div className="w-[7px] shrink-0 bg-[#7b7878]" />
            <PropertyPanel />
          </div>
        </div>
      </main>
      <footer className="h-[7px] shrink-0 border-b border-[#595254] bg-[#a4a0a0]" />
      <Annotations />
    </div>
  );
}
